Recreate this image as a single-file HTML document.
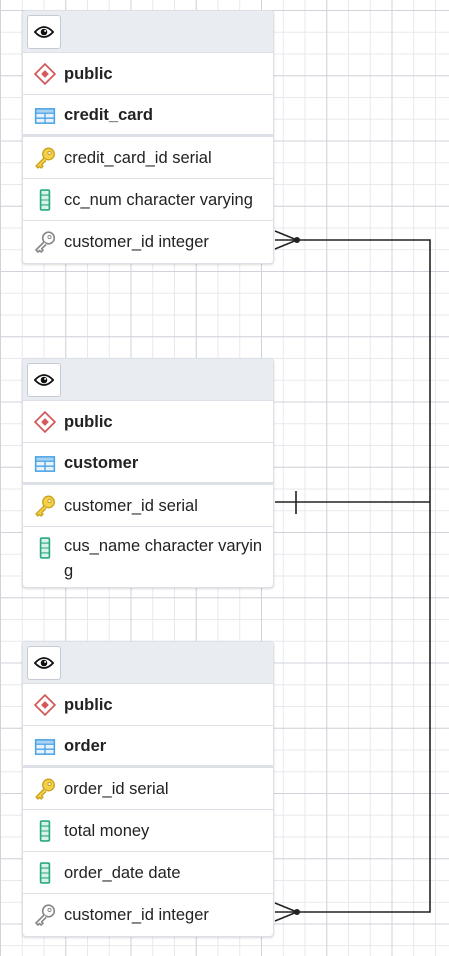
<!DOCTYPE html>
<html><head><meta charset="utf-8"><style>
*{margin:0;padding:0;box-sizing:border-box}
html,body{width:449px;height:956px;overflow:hidden;background:#fff}
body{position:relative;font-family:"Liberation Sans",Arial,sans-serif;
background-image:
linear-gradient(to right,#d0d3da 1px,transparent 1px),
linear-gradient(to bottom,#d0d3da 1px,transparent 1px),
linear-gradient(to right,#e8e9ed 1px,transparent 1px),
linear-gradient(to bottom,#e8e9ed 1px,transparent 1px);
background-size:65.25px 65.25px,65.25px 65.25px,21.75px 21.75px,21.75px 21.75px;
background-position:0 10px,0 10px,0 10px,0 10px;}
.t{position:absolute;left:22px;width:252px;background:#fff;border:1px solid #dde0e6;border-radius:4px;box-shadow:0 1px 2px rgba(0,0,0,.15)}
.h{height:42px;background:#e9ecf1;border-bottom:1px solid #dde0e6;position:relative;border-radius:4px 4px 0 0}
.eye{position:absolute;left:4px;top:4px;width:34px;height:34px;border:1px solid #c5cad3;border-radius:3px;background:#fff;display:flex;align-items:center;justify-content:center}
.r{height:42px;border-bottom:1px solid #dde0e6;position:relative;font-size:16.5px;color:#222;padding-left:41px;line-height:42px;white-space:nowrap}
.r:last-child{border-bottom:none}
.b{font-weight:bold}
.sep{border-bottom:3px solid #dde0e6;height:42px;line-height:40px}
.r svg{position:absolute;left:11px;top:10px}
</style></head><body>

<svg width="0" height="0" style="position:absolute">
<defs>
<symbol id="eye" viewBox="0 0 22 14"><path d="M1 7 Q11 -4 21 7 Q11 18 1 7Z" fill="none" stroke="#111" stroke-width="2"/><circle cx="11" cy="7" r="3.6" fill="#111"/><circle cx="12.3" cy="5.8" r="1.1" fill="#fff"/></symbol>
<symbol id="pub" viewBox="0 0 20 20"><path d="M10 1 L19 10 L10 19 L1 10Z" fill="#fff" stroke="#d45a5a" stroke-width="1.6"/><path d="M10 6.5 L13.5 10 L10 13.5 L6.5 10Z" fill="#d45a5a"/></symbol>
<symbol id="tbl" viewBox="0 0 20 20"><rect x="1.5" y="3.5" width="17" height="13" fill="#e8f2fb" stroke="#4aa3e6" stroke-width="1.4"/><path d="M1.5 7.5H18.5M1.5 12H18.5M10 7.5V16.5" stroke="#4aa3e6" stroke-width="1.2"/><rect x="1.5" y="3.5" width="17" height="4" fill="#4aa3e6" opacity=".4"/></symbol>
<symbol id="key" viewBox="0 0 22 22"><circle cx="14.5" cy="7" r="5.8" fill="#f5d04a" stroke="#c9a21c" stroke-width="1.3"/><circle cx="15.5" cy="6" r="1.6" fill="#fff" stroke="#c9a21c"/><path d="M10.5 10.5 L2 19 L4 21 L5.5 19.5 L7.2 21 L9 19.2 L7.6 17.8 L12 13.5" fill="#f5d04a" stroke="#c9a21c" stroke-width="1.3" stroke-linejoin="round"/></symbol>
<symbol id="fkey" viewBox="0 0 22 22"><circle cx="14.5" cy="7" r="5.8" fill="#fff" stroke="#888" stroke-width="1.6"/><circle cx="15.5" cy="6" r="1.6" fill="#fff" stroke="#888"/><path d="M10.5 10.5 L2 19 L4 21 L5.5 19.5 L7.2 21 L9 19.2 L7.6 17.8 L12 13.5" fill="#fff" stroke="#888" stroke-width="1.6" stroke-linejoin="round"/></symbol>
<symbol id="col" viewBox="0 0 20 20"><rect x="6" y="1" width="8" height="18" rx="1" fill="#d9f3ea" stroke="#2aa883" stroke-width="1.5"/><path d="M6 5.5H14M6 10H14M6 14.5H14" stroke="#2aa883" stroke-width="1"/></symbol>
</defs></svg>

<div class="t" style="top:10px">
<div class="h"><div class="eye"><svg width="20" height="14"><use href="#eye"/></svg></div></div>
<div class="r b"><svg width="22" height="22"><use href="#pub"/></svg>public</div>
<div class="r b sep"><svg width="22" height="22"><use href="#tbl"/></svg>credit_card</div>
<div class="r"><svg width="22" height="22"><use href="#key"/></svg>credit_card_id serial</div>
<div class="r"><svg width="22" height="22"><use href="#col"/></svg>cc_num character varying</div>
<div class="r"><svg width="22" height="22"><use href="#fkey"/></svg>customer_id integer</div>
</div>

<div class="t" style="top:358px">
<div class="h"><div class="eye"><svg width="20" height="14"><use href="#eye"/></svg></div></div>
<div class="r b"><svg width="22" height="22"><use href="#pub"/></svg>public</div>
<div class="r b sep"><svg width="22" height="22"><use href="#tbl"/></svg>customer</div>
<div class="r"><svg width="22" height="22"><use href="#key"/></svg>customer_id serial</div>
<div class="r" style="height:60px;line-height:25px;padding-top:7px;white-space:normal;padding-right:4px"><svg width="22" height="22"><use href="#col"/></svg>cus_name character varyin<br>g</div>
</div>

<div class="t" style="top:641px">
<div class="h"><div class="eye"><svg width="20" height="14"><use href="#eye"/></svg></div></div>
<div class="r b"><svg width="22" height="22"><use href="#pub"/></svg>public</div>
<div class="r b sep"><svg width="22" height="22"><use href="#tbl"/></svg>order</div>
<div class="r"><svg width="22" height="22"><use href="#key"/></svg>order_id serial</div>
<div class="r"><svg width="22" height="22"><use href="#col"/></svg>total money</div>
<div class="r"><svg width="22" height="22"><use href="#col"/></svg>order_date date</div>
<div class="r"><svg width="22" height="22"><use href="#fkey"/></svg>customer_id integer</div>
</div>

<svg style="position:absolute;left:0;top:0" width="449" height="956">
<g stroke="#222" stroke-width="1.6" fill="none">
<path d="M275 240H430V912H275"/>
<path d="M275 231L297 240L275 249"/>
<path d="M275 903L297 912L275 921"/>
<path d="M275 502H430"/>
<path d="M296 491V514"/>
</g>
<circle cx="297" cy="240" r="3" fill="#222"/>
<circle cx="297" cy="912" r="3" fill="#222"/>
</svg>
</body></html>
